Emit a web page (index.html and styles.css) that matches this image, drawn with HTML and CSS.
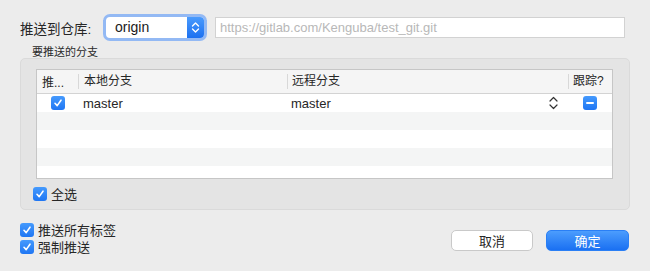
FILE: index.html
```html
<!DOCTYPE html>
<html lang="zh-CN">
<head>
  <meta charset="UTF-8">
  <title>推送</title>
  <link rel="stylesheet" href="styles.css">
</head>
<body>
  <div class="repo-row">
    <span class="repo-label">推送到仓库:</span>
    <div class="popup">
      <div class="popup-field">
        <span class="popup-value">origin</span>
        <span class="popup-stepper">
          <svg width="9" height="13" viewBox="0 0 9 13"><path d="M1.5 5 L4.5 2 L7.5 5 M1.5 8 L4.5 11 L7.5 8" fill="none" stroke="#fff" stroke-width="1.4" stroke-linecap="round" stroke-linejoin="round"/></svg>
        </span>
      </div>
    </div>
    <input class="url-input" type="text" placeholder="https://gitlab.com/Kenguba/test_git.git">
  </div>

  <div class="section-label">要推送的分支</div>

  <div class="group">
    <div class="branch-table">
      <div class="row head">
        <div class="cell">推...</div>
        <div class="cell">本地分支</div>
        <div class="cell remote">远程分支</div>
        <div class="cell track">跟踪?</div>
      </div>
      <div class="row">
        <div class="cell center"><span class="check"><svg width="10" height="10" viewBox="0 0 10 10"><path d="M2 5.3 L4.2 7.6 L8 2.2" fill="none" stroke="#fff" stroke-width="1.6" stroke-linecap="round" stroke-linejoin="round"/></svg></span></div>
        <div class="cell">master</div>
        <div class="cell remote">
          <span>master</span>
          <svg class="chevrons" width="9" height="14" viewBox="0 0 9 14"><path d="M1 5 L4.5 1.5 L8 5 M1 9 L4.5 12.5 L8 9" fill="none" stroke="#333" stroke-width="1.2" stroke-linecap="round" stroke-linejoin="round"/></svg>
        </div>
        <div class="cell center"><span class="check minus"><span class="bar"></span></span></div>
      </div>
      <div class="row stripe"></div>
      <div class="row"></div>
      <div class="row stripe"></div>
      <div class="row short"></div>
    </div>
    <label class="check-row select-all">
      <span class="check"><svg width="10" height="10" viewBox="0 0 10 10"><path d="M2 5.3 L4.2 7.6 L8 2.2" fill="none" stroke="#fff" stroke-width="1.6" stroke-linecap="round" stroke-linejoin="round"/></svg></span>
      全选
    </label>
  </div>

  <div class="footer">
    <div class="options">
      <label class="check-row">
        <span class="check"><svg width="10" height="10" viewBox="0 0 10 10"><path d="M2 5.3 L4.2 7.6 L8 2.2" fill="none" stroke="#fff" stroke-width="1.6" stroke-linecap="round" stroke-linejoin="round"/></svg></span>
        推送所有标签
      </label>
      <label class="check-row">
        <span class="check"><svg width="10" height="10" viewBox="0 0 10 10"><path d="M2 5.3 L4.2 7.6 L8 2.2" fill="none" stroke="#fff" stroke-width="1.6" stroke-linecap="round" stroke-linejoin="round"/></svg></span>
        强制推送
      </label>
    </div>
    <div class="buttons">
      <button class="btn">取消</button>
      <button class="btn primary">确定</button>
    </div>
  </div>
</body>
</html>
```

FILE: styles.css
```css
body {
  margin: 0;
  width: 650px;
  height: 271px;
  overflow: hidden;
  background: #ececec;
  font-family: "Liberation Sans", "Noto Sans CJK SC", sans-serif;
  font-size: 13px;
  color: #262626;
}
.repo-row {
  display: flex;
  align-items: center;
  padding: 14px 0 0 20px;
  height: 27px;
}
.repo-label {
  width: 83px;
  font-size: 13.5px;
}
.popup {
  width: 104px;
  height: 27px;
  box-sizing: border-box;
  padding: 3px;
  border-radius: 7px;
  background: #93b9f4;
}
.popup-field {
  display: flex;
  height: 21px;
  background: #fff;
  border-radius: 4px;
  overflow: hidden;
}
.popup-value {
  flex: 1;
  padding-left: 9px;
  font-size: 14px;
  line-height: 21px;
  color: #1a1a1a;
}
.popup-stepper {
  width: 17px;
  display: flex;
  align-items: center;
  justify-content: center;
  background: linear-gradient(#4a9bfd, #1c70f0);
}
.url-input {
  margin-left: 8px;
  width: 410px;
  height: 21px;
  box-sizing: border-box;
  border: 1px solid #d2d2d2;
  background: #fff;
  padding: 0 4px;
  font-family: "Liberation Sans", sans-serif;
  font-size: 13px;
  outline: none;
}
.url-input::placeholder {
  color: #b8b8b8;
}
.section-label {
  margin: 5px 0 0 32px;
  font-size: 11px;
  line-height: 12px;
  height: 12px;
  color: #2a2a2a;
}
.group {
  margin: 0 20px;
  height: 152px;
  box-sizing: border-box;
  padding: 10px 16px 0 15px;
  background: #e4e4e4;
  border: 1px solid #dadada;
  border-radius: 5px;
}
.branch-table {
  border: 1px solid #c6c6c6;
  background: #fff;
}
.row {
  display: grid;
  grid-template-columns: 41px 209px 281px 1fr;
  height: 18px;
  align-items: center;
}
.row.head {
  height: 23px;
  background: #f5f5f5;
  border-bottom: 1px solid #d3d3d3;
  font-size: 12px;
}
.row.head .cell + .cell {
  border-left: 1px solid #d8d8d8;
  line-height: 15px;
}
.row.stripe {
  background: #f4f5f5;
}
.row.short {
  height: 12px;
}
.cell {
  padding-left: 5px;
  white-space: nowrap;
}
.cell.remote {
  padding-left: 4px;
  display: flex;
  align-items: center;
  justify-content: space-between;
  padding-right: 10px;
}
.cell.track {
  padding-left: 4px;
}
.row:not(.head) .cell {
  font-size: 13px;
}
.cell.center {
  padding-left: 0;
  display: flex;
  justify-content: center;
}
.check {
  width: 14px;
  height: 14px;
  border-radius: 3px;
  background: linear-gradient(#459afd, #1f76f3);
  display: inline-flex;
  align-items: center;
  justify-content: center;
  flex-shrink: 0;
}
.check.minus .bar {
  width: 8px;
  height: 2px;
  background: #fff;
  border-radius: 1px;
}
.check-row {
  display: flex;
  align-items: center;
  gap: 4px;
  height: 17px;
  font-size: 13px;
}
.select-all {
  margin: 7px 0 0 -3px;
  height: 15px;
}
.footer {
  display: flex;
  justify-content: space-between;
  align-items: flex-end;
  padding: 11px 21px 0 20px;
}
.buttons {
  display: flex;
  gap: 13px;
  margin-bottom: 4px;
}
.btn {
  width: 82px;
  height: 21px;
  border: 1px solid #c9c9c9;
  border-radius: 5px;
  background: #fff;
  font-family: "Liberation Sans", "Noto Sans CJK SC", sans-serif;
  font-size: 13px;
  color: #262626;
  padding: 0;
}
.btn.primary {
  width: 83px;
  border-color: #2a7ff5;
  background: linear-gradient(#4c9dfd, #1a70f2);
  color: #fff;
}
```
